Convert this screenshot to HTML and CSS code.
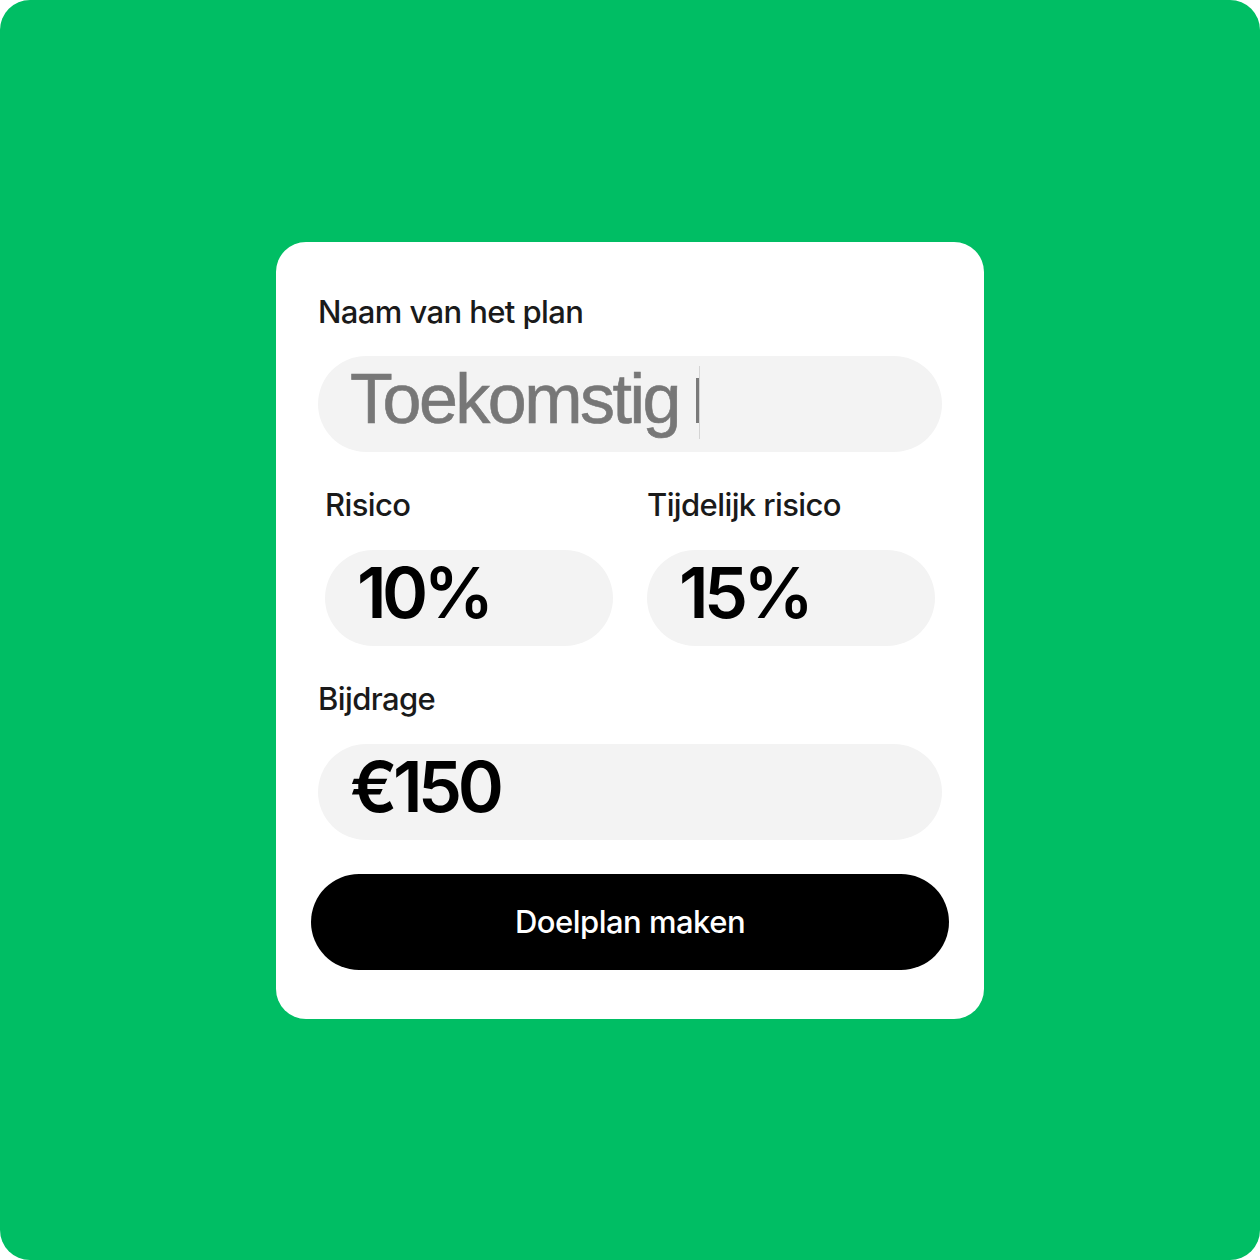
FILE: index.html
```html
<!DOCTYPE html>
<html lang="nl">
<head>
    <meta charset="UTF-8">
    <meta name="viewport" content="width=device-width, initial-scale=1.0">
    <title>Doelplan</title>
    <link rel="stylesheet" href="styles.css">
</head>
<body>
    <div class="canvas">
        <div class="card">
            <!-- Plan name -->
            <label class="label">Naam van het plan</label>
            <div class="field field-name">
                <span class="value muted">Toekomstig</span>
                <span class="bar"></span>
                <span class="caret"></span>
            </div>

            <!-- Risk row -->
            <div class="row">
                <div class="col">
                    <label class="label">Risico</label>
                    <div class="field">
                        <span class="value">10%</span>
                    </div>
                </div>
                <div class="col">
                    <label class="label">Tijdelijk risico</label>
                    <div class="field">
                        <span class="value">15%</span>
                    </div>
                </div>
            </div>

            <!-- Contribution -->
            <label class="label">Bijdrage</label>
            <div class="field">
                <span class="value">€150</span>
            </div>

            <button class="submit">Doelplan maken</button>
        </div>
    </div>
</body>
</html>
```

FILE: styles.css
```css
* {
    padding: 0;
    margin: 0;
    box-sizing: border-box;
    font-family: Inter, "Liberation Sans", sans-serif;
}
body {
    background-color: #ffffff;
}

.canvas {
    width: 1260px;
    height: 1260px;
    background-color: #00be64;
    border-radius: 30px;
    display: flex;
    justify-content: center;
    align-items: center;
}

.card {
    width: 708px;
    height: 777px;
    background-color: #fff;
    border-radius: 30px;
    padding: 52px 42px 0 42px;
    display: flex;
    flex-direction: column;
}

.label {
    display: block;
    font-size: 31px;
    line-height: 36px;
    font-weight: 500;
    letter-spacing: -0.6px;
    color: #1a1a1a;
    margin-bottom: 26px;
}

.field {
    height: 96px;
    border-radius: 48px;
    background-color: #f3f3f3;
    display: flex;
    align-items: center;
    padding: 0 32px 10px 32px;
}
.value {
    font-size: 70px;
    line-height: 80px;
    font-weight: 600;
    letter-spacing: -4.5px;
    color: #000;
}
.value.muted {
    font-family: "Liberation Sans", Arial, sans-serif;
    font-weight: 400;
    color: #777;
    letter-spacing: -2.5px;
    -webkit-text-stroke: 0.6px #777;
}

/* fake text cursor */
.bar {
    width: 3px;
    height: 45px;
    background-color: #7a7a7a;
    margin-left: 17px;
    margin-top: 4px;
}
.caret {
    width: 1px;
    height: 73px;
    background-color: #d4d4d4;
    margin-top: 8px;
}

.row {
    display: flex;
    gap: 34px;
    padding: 0 7px;
    margin-top: 35px;
}
.col {
    flex: 1;
}
.row .label {
    margin-bottom: 27px;
}
.row + .label {
    margin-top: 35px;
    margin-bottom: 27px;
}

.submit {
    margin: 34px -7px 0 -7px;
    height: 96px;
    border: none;
    border-radius: 48px;
    background-color: #000;
    color: #fff;
    font-size: 31px;
    font-weight: 500;
    letter-spacing: -0.5px;
    cursor: pointer;
}
```
